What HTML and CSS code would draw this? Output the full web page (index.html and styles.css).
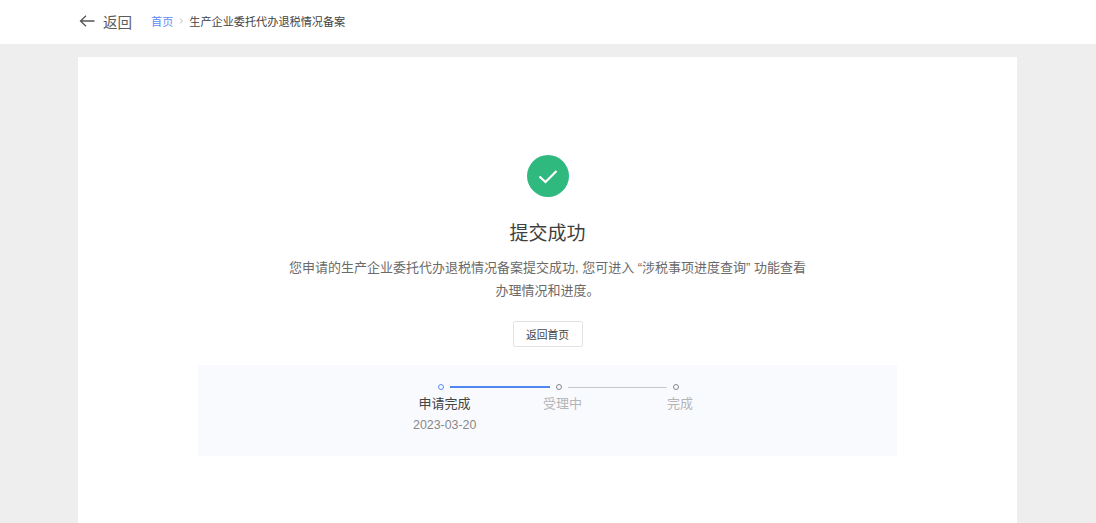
FILE: index.html
```html
<!DOCTYPE html>
<html lang="zh">
<head>
<meta charset="utf-8">
<title>提交成功</title>
<link rel="stylesheet" href="styles.css">
</head>
<body>
<header class="topbar">
  <a class="back">
    <svg class="back-icon" width="16" height="14" viewBox="0 0 16 14"><path d="M15.500 7H1.500M7 1.800 1.500 7 7 12.200" fill="none" stroke="#555" stroke-width="1.300"/></svg>
    <span>返回</span>
  </a>
  <nav class="crumbs">
    <span class="crumb-link">首页</span>
    <svg class="crumb-sep" width="4" height="6" viewBox="0 0 4 6"><path d="M1 .5 3.400 3 1 5.500" fill="none" stroke="#aaa" stroke-width=".8"/></svg>
    <span>生产企业委托代办退税情况备案</span>
  </nav>
</header>
<main class="card">
  <svg class="ok-icon" width="42" height="42" viewBox="0 0 42 42"><circle cx="21" cy="21" r="21" fill="#2fb97f"/><path d="M12.500 21.500 18.500 27 29.500 16" fill="none" stroke="#fff" stroke-width="2.200"/></svg>
  <h1 class="title">提交成功</h1>
  <p class="desc">您申请的生产企业委托代办退税情况备案提交成功, 您可进入 “涉税事项进度查询” 功能查看<br>办理情况和进度。</p>
  <button class="home-btn">返回首页</button>
  <section class="progress">
    <div class="track">
      <span class="dot dot-active"></span>
      <span class="line line-active"></span>
      <span class="dot"></span>
      <span class="line"></span>
      <span class="dot"></span>
    </div>
    <div class="labels">
      <div class="label label-first">
        <div class="label-name label-current">申请完成</div>
        <div class="label-date">2023-03-20</div>
      </div>
      <div class="label label-second"><div class="label-name">受理中</div></div>
      <div class="label label-third"><div class="label-name">完成</div></div>
    </div>
  </section>
</main>
</body>
</html>
```
FILE: styles.css
```css
* { box-sizing: border-box; }
html, body { height: 100%; }
body {
  margin: 0;
  background: #eeeeee;
  overflow: hidden;
  font-family: "Liberation Sans", "Noto Sans CJK SC", sans-serif;
  color: #333;
}
.topbar {
  height: 44px;
  background: #fff;
  display: flex;
  align-items: center;
  padding: 0 0 2px 79px;
}
.back {
  display: flex;
  align-items: center;
  gap: 8px;
  font-size: 14.500px;
  color: #5c5c5c;
}
.crumbs {
  display: flex;
  align-items: center;
  margin-left: 19px;
  font-size: 11.150px;
  color: #444;
}
.crumb-link { color: #5f8df5; }
.crumb-sep { margin: 0 6px 0 6px; }
.card {
  width: 939px;
  height: 466px;
  margin: 13px 0 0 78px;
  background: #fff;
  display: flex;
  flex-direction: column;
  align-items: center;
  padding-top: 98px;
}
.ok-icon { display: block; }
.title {
  margin: 23px 0 0;
  font-size: 19px;
  line-height: 28px;
  font-weight: 400;
  color: #3f3f3f;
}
.desc {
  margin: 9px 0 0;
  font-size: 13px;
  line-height: 22.500px;
  text-align: center;
  color: #6a6a6a;
}
.home-btn {
  margin-top: 19px;
  width: 70px;
  height: 26px;
  padding: 0;
  background: #fff;
  border: 1px solid #e3e3e3;
  border-radius: 2px;
  font: inherit;
  font-size: 10.800px;
  color: #444;
}
.progress {
  margin-top: 18px;
  width: 699px;
  height: 91px;
  background: #f9fafe;
  padding-top: 19px;
}
.track {
  display: flex;
  align-items: center;
  height: 6px;
  margin-left: 240px;
}
.dot {
  width: 6px;
  height: 6px;
  border: 1.500px solid #888;
  border-radius: 50%;
  flex: none;
}
.dot-active { border-color: #5b8ef5; }
.line {
  width: 99.500px;
  height: 1px;
  margin: 0 6px;
  background: #c8c8c8;
}
.line-active { height: 1.500px; background: #4f86f0; }
.labels {
  display: flex;
  margin-top: 4px;
  margin-left: 215px;
  font-size: 13px;
  line-height: 19px;
}
.label { text-align: center; }
.label-first { width: 63px; }
.label-second { margin-left: 67px; }
.label-third { margin-left: 85px; }
.label-name { color: #b5b5b5; }
.label-current { color: #444; }
.label-date { margin-top: 3px; font-size: 12.400px; color: #888; white-space: nowrap; }
```
